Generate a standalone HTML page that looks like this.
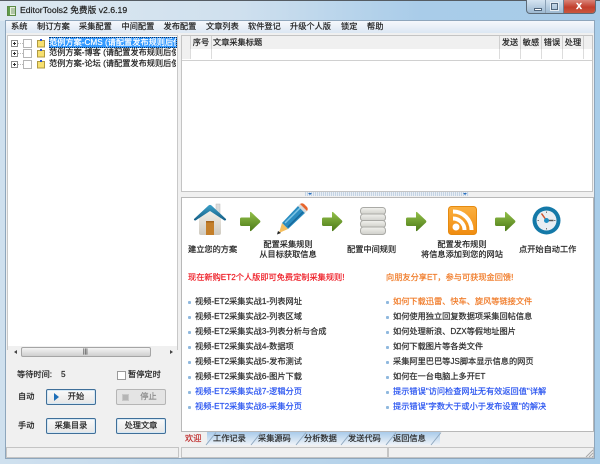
<!DOCTYPE html>
<html lang="zh"><head><meta charset="utf-8"><title>EditorTools2</title>
<style>
html,body{margin:0;padding:0;background:#fff}
#w{position:relative;width:600px;height:464px;overflow:hidden;font:8.2px/12px "Liberation Sans","Noto Sans CJK SC",sans-serif;color:#222;-webkit-text-stroke:.2px;background:linear-gradient(90deg,#cfe0ee,#b5d2ea 60%,#a9cde9)}
.a{position:absolute;white-space:nowrap}
.t{position:absolute;white-space:nowrap;font-size:8.2px;line-height:12px}
.c{text-align:center}
.hc{position:absolute;top:36px;height:13px;font-size:8.2px;line-height:13px;text-align:center;border-right:1px solid #cfcfcf;color:#222}
.v{position:absolute;top:49px;height:10px;border-right:1px solid #dcdcdc}
.btn{position:absolute;height:14px;width:48px;border:1px solid #3f6f99;border-radius:2px;background:linear-gradient(#fafafa,#e6e6e6);text-align:center;font-size:8.2px;line-height:14px;color:#222;box-shadow:inset 0 0 0 1px #d5e8f5}
.l{position:absolute;white-space:nowrap;font-size:8.2px;line-height:12px;color:#2c2c2c}
.d{position:absolute;width:3px;height:3px;background:#8fb8de;border-radius:1px}
.b{color:#2a55f0}.o{color:#f07b28}.r{color:#ee1c25}
.tab{position:absolute;top:432px;height:13px;font-size:8.2px;line-height:13px;color:#2c2c2c;white-space:nowrap}
</style></head><body><div id="w">
<!-- title -->
<div class="a" style="left:0;top:0;width:600px;height:1px;background:#555c63"></div>
<div class="a" style="left:0;top:1px;width:600px;height:20px;background:linear-gradient(90deg,#dde8f1 0,#cfe0ee 40%,#a9cce9 70%,#a7cbe8 100%)"></div>
<svg class="a" style="left:7px;top:6px" width="9" height="10" viewBox="0 0 9 10"><rect x=".5" y=".5" width="8" height="9" fill="#e6f0da" stroke="#5b8a45"/><rect x="1" y="1" width="2" height="8" fill="#5f9c4a"/><path d="M4 3h4M4 5h4M4 7h4" stroke="#7a9a72"/></svg>
<div class="t" style="left:20px;top:4px;font-size:8.7px;line-height:13px;color:#222">EditorTools2 免费版 v2.6.19</div>
<div class="a" style="left:526px;top:0;width:70px;height:14px;border:1px solid #5d6b78;border-top:0;border-radius:0 0 4px 4px;box-sizing:border-box;background:linear-gradient(#d5e4f1,#9db9d2);overflow:hidden">
<div class="a" style="left:37px;top:0;width:32px;height:13px;background:linear-gradient(#d98478,#c23f2d 55%,#c8573f)"></div>
<div class="a" style="left:18px;top:0;width:1px;height:13px;background:#8aa0b5"></div>
<div class="a" style="left:36px;top:0;width:1px;height:13px;background:#6c8197"></div>
<div class="a" style="left:7px;top:8px;width:6px;height:1px;background:#fff;border:1px solid #52677d"></div>
<div class="a" style="left:24px;top:3px;width:5px;height:5px;border:1px solid #52677d;outline:1px solid #e8eef4"></div>
<div class="t" style="left:49px;top:0;color:#fff;font-weight:bold;font-size:11px;line-height:13px">x</div>
</div>
<!-- client -->
<div class="a" style="left:5px;top:20px;width:590px;height:439px;background:#f0f0f0;border:1px solid #8ea6bc;box-sizing:border-box"></div>
<div class="a" style="left:6px;top:21px;width:588px;height:12px;background:linear-gradient(#f5f8fc,#dce7f3)"></div>
<div class="t" style="left:11px;top:21px">系统</div>
<div class="t" style="left:37px;top:21px">制订方案</div>
<div class="t" style="left:79px;top:21px">采集配置</div>
<div class="t" style="left:121.500px;top:21px">中间配置</div>
<div class="t" style="left:163.500px;top:21px">发布配置</div>
<div class="t" style="left:206px;top:21px">文章列表</div>
<div class="t" style="left:248px;top:21px">软件登记</div>
<div class="t" style="left:290px;top:21px">升级个人版</div>
<div class="t" style="left:341px;top:21px">锁定</div>
<div class="t" style="left:367px;top:21px">帮助</div>
<!-- tree -->
<div class="a" style="left:7px;top:35px;width:171px;height:315px;background:#fff;border:1px solid #c8c8c8;box-sizing:border-box"></div>
<svg class="a" style="left:10px;top:38px" width="36" height="34" viewBox="0 0 36 34">
<g fill="#fff" stroke="#8a8a8a"><rect x="1.500" y="2.500" width="6" height="6"/><rect x="1.500" y="12.500" width="6" height="6"/><rect x="1.500" y="23.500" width="6" height="6"/></g>
<path d="M3 5.500h3M4.500 4v3M3 15.500h3M4.500 14v3M3 26.500h3M4.500 25v3" stroke="#333"/>
<path d="M8 5.500h5M8 15.500h5M8 26.500h5" stroke="#bbb" stroke-dasharray="1 1"/>
<g fill="#fff" stroke="#b5b5b5"><rect x="13.500" y="1.500" width="8" height="8"/><rect x="13.500" y="11.500" width="8" height="8"/><rect x="13.500" y="22.500" width="8" height="8"/></g>
<g fill="#f7e070" stroke="#b09a40"><rect x="27.500" y="2.500" width="7" height="6.500"/><rect x="27.500" y="12.500" width="7" height="6.500"/><rect x="27.500" y="23.500" width="7" height="6.500"/></g>
<g fill="#2a4fd0"><rect x="30" y="1" width="2" height="2"/><rect x="30" y="11" width="2" height="2"/><rect x="30" y="22" width="2" height="2"/></g>
</svg>
<div class="a" style="left:49px;top:37px;width:128px;height:11px;background:#3399ff;outline:1px dotted #10305a;outline-offset:-1px"></div>
<div class="a" style="left:49px;top:37px;width:127px;height:12px;overflow:hidden;color:#fff;font-size:8.2px;line-height:12px">范例方案-CMS (请配置发布规则后使用)</div>
<div class="a" style="left:49px;top:47px;width:127px;height:12px;overflow:hidden;font-size:8.2px;line-height:12px">范例方案-博客 (请配置发布规则后使用)</div>
<div class="a" style="left:49px;top:58px;width:127px;height:12px;overflow:hidden;font-size:8.2px;line-height:12px">范例方案-论坛 (请配置发布规则后使用)</div>
<!-- scrollbar -->
<div class="a" style="left:8px;top:346px;width:169px;height:12px;background:#f0f0f0"></div>
<div class="a" style="left:21px;top:347px;width:130px;height:10px;background:linear-gradient(#f4f4f4,#cfcfcf);border:1px solid #a5a5a5;border-radius:2px;box-sizing:border-box"></div>
<div class="t" style="left:83px;top:346px;font-size:6px;color:#444">|||</div>
<div class="a" style="left:12px;top:350px;width:0;height:0;border:2px solid transparent;border-right:3px solid #444"></div>
<div class="a" style="left:170px;top:350px;width:0;height:0;border:2px solid transparent;border-left:3px solid #444"></div>
<!-- controls -->
<div class="t" style="left:17px;top:369px">等待时间:</div>
<div class="t" style="left:61px;top:369px">5</div>
<div class="a" style="left:117px;top:371px;width:7px;height:7px;background:#fff;border:1px solid #9a9a9a"></div>
<div class="t" style="left:128px;top:369px">暂停定时</div>
<div class="t" style="left:18px;top:391px">自动</div>
<div class="btn" style="left:46px;top:389px;text-indent:10px">开始</div>
<div class="a" style="left:54px;top:393px;width:0;height:0;border:4px solid transparent;border-left:5px solid #1e6fb8;border-right:0"></div>
<div class="btn" style="left:116px;top:389px;border-color:#b5b5b5;box-shadow:none;color:#8a8a8a;background:#e4e4e4;text-indent:15px">停止</div>
<div class="a" style="left:122px;top:394px;width:5px;height:5px;background:#b5b5b5;border:1px solid #c8c8c8"></div>
<div class="t" style="left:18px;top:420px">手动</div>
<div class="btn" style="left:46px;top:418px">采集目录</div>
<div class="btn" style="left:116px;top:418px">处理文章</div>
<div class="a" style="left:6px;top:447px;width:173px;height:11px;background:#f0f0f0;border:1px solid #c4c4c4;box-sizing:border-box"></div>
<!-- grid -->
<div class="a" style="left:181px;top:35px;width:412px;height:157px;background:#fff;border:1px solid #c4c4c4;box-sizing:border-box"></div>
<div class="a" style="left:182px;top:36px;width:410px;height:13px;background:#f0f0f0"></div>
<div class="a" style="left:182px;top:49px;width:410px;height:11px;border-bottom:1px solid #d0d0d0"></div>
<div class="a" style="left:182px;top:49px;width:8px;height:10px;background:#f0f0f0"></div>
<div class="hc" style="left:182px;width:8px"></div>
<div class="hc" style="left:191px;width:20px">序号</div>
<div class="hc" style="left:212px;width:287px;text-align:left;text-indent:1px">文章采集标题</div>
<div class="hc" style="left:500px;width:20px">发送</div>
<div class="hc" style="left:521px;width:20px">敏感</div>
<div class="hc" style="left:542px;width:20px">错误</div>
<div class="hc" style="left:563px;width:20px">处理</div>
<div class="v" style="left:190px"></div><div class="v" style="left:211px"></div><div class="v" style="left:499px"></div><div class="v" style="left:520px"></div><div class="v" style="left:541px"></div><div class="v" style="left:562px"></div><div class="v" style="left:583px"></div>
<!-- splitter -->
<div class="a" style="left:305px;top:192px;width:164px;height:4px;background:repeating-linear-gradient(90deg,#c5d4e4 0 1px,#e8eef5 1px 2px)"></div>
<div class="a" style="left:308px;top:193px;width:0;height:0;border:2px solid transparent;border-top:2px solid #2a70c0;border-bottom:0"></div>
<div class="a" style="left:463px;top:193px;width:0;height:0;border:2px solid transparent;border-top:2px solid #2a70c0;border-bottom:0"></div>
<!-- panel -->
<div class="a" style="left:181px;top:197px;width:413px;height:235px;background:#fff;border:1px solid #b8b8b8;box-sizing:border-box"></div>
<svg width="0" height="0" style="position:absolute"><defs>
<linearGradient id="g" x1="0" y1="0" x2="0" y2="1"><stop offset="0" stop-color="#93c04a"/><stop offset="1" stop-color="#4c7a18"/></linearGradient>
<linearGradient id="wall" x1="0" y1="0" x2="0" y2="1"><stop offset="0" stop-color="#f4f2ec"/><stop offset="1" stop-color="#cfcac0"/></linearGradient>
<linearGradient id="roof" x1="0" y1="0" x2="0" y2="1"><stop offset="0" stop-color="#3ba0c8"/><stop offset="1" stop-color="#155f86"/></linearGradient>
<linearGradient id="rss" x1="0" y1="0" x2="0" y2="1"><stop offset="0" stop-color="#fbb040"/><stop offset="1" stop-color="#f08c10"/></linearGradient>
<linearGradient id="cyl" x1="0" y1="0" x2="0" y2="1"><stop offset="0" stop-color="#f2f2ee"/><stop offset="1" stop-color="#cfcfca"/></linearGradient>
</defs></svg>
<!-- house -->
<svg class="a" style="left:193px;top:203px" width="34" height="33" viewBox="0 0 34 33"><rect x="23" y="1" width="4" height="10" fill="#dcdcdc" stroke="#bbb" stroke-width=".5"/><path d="M6 15L17 6l11 9v15a2 2 0 0 1-2 2H8a2 2 0 0 1-2-2z" fill="url(#wall)"/><path d="M1 16L15.500 2.500q1.500-1.200 3 0L33 16q.5 1.500-1.500 1.500L17 8 2.500 17.500Q.5 17.500 1 16z" fill="url(#roof)"/><rect x="13" y="18" width="8" height="14" fill="#c47f2a"/><rect x="13" y="18" width="8" height="1.500" fill="#a5651c"/></svg>
<!-- arrows -->
<svg class="a" style="left:239px;top:211px" width="22" height="21" viewBox="0 0 22 21"><path d="M1 8q0-1.500 1.500-1.500H11V1.500q0-1 1-.5l9 8.500q.8 1 0 2L12 20q-1 .5-1-.5V15H2.500Q1 15 1 13.500z" fill="url(#g)"/></svg>
<svg class="a" style="left:321px;top:211px" width="22" height="21" viewBox="0 0 22 21"><path d="M1 8q0-1.500 1.500-1.500H11V1.500q0-1 1-.5l9 8.500q.8 1 0 2L12 20q-1 .5-1-.5V15H2.500Q1 15 1 13.500z" fill="url(#g)"/></svg>
<svg class="a" style="left:405px;top:211px" width="22" height="21" viewBox="0 0 22 21"><path d="M1 8q0-1.500 1.500-1.500H11V1.500q0-1 1-.5l9 8.500q.8 1 0 2L12 20q-1 .5-1-.5V15H2.500Q1 15 1 13.500z" fill="url(#g)"/></svg>
<svg class="a" style="left:494px;top:211px" width="22" height="21" viewBox="0 0 22 21"><path d="M1 8q0-1.500 1.500-1.500H11V1.500q0-1 1-.5l9 8.500q.8 1 0 2L12 20q-1 .5-1-.5V15H2.500Q1 15 1 13.500z" fill="url(#g)"/></svg>
<!-- pencil -->
<svg class="a" style="left:276px;top:203px" width="32" height="32" viewBox="0 0 32 32"><path d="M6 20L22 3l7 7L12 26z" fill="#2a8cc0"/><path d="M9 20L24 5" stroke="#7fc6e6" stroke-width="1.500"/><path d="M12 24L27 9" stroke="#17689a" stroke-width="1.500"/><path d="M22 3l2-2 7 7-2 2z" fill="#d8d8d8"/><path d="M24 1q2-1.500 4 0l3 3q1.500 2 0 4z" fill="#e8652c"/><path d="M6 20l6 6-9 4z" fill="#f6c060"/><path d="M1 31.500l1-3.500 3 2z" fill="#222"/></svg>
<!-- db -->
<svg class="a" style="left:360px;top:207px" width="26" height="28" viewBox="0 0 26 28"><g fill="url(#cyl)" stroke="#aaaaa6"><rect x=".5" y=".5" width="25" height="7" rx="3"/><rect x=".5" y="7" width="25" height="7" rx="3"/><rect x=".5" y="13.500" width="25" height="7" rx="3"/><rect x=".5" y="20" width="25" height="7.500" rx="3"/></g></svg>
<!-- rss -->
<svg class="a" style="left:448px;top:206px" width="29" height="29" viewBox="0 0 29 29"><rect x=".5" y=".5" width="28" height="28" rx="3" fill="url(#rss)" stroke="#e58a10"/><circle cx="8" cy="21" r="3.500" fill="#fff"/><path d="M5 12.500a11.500 11.500 0 0 1 11.500 11.500M5 5.500a18.500 18.500 0 0 1 18.500 18.500" fill="none" stroke="#fff" stroke-width="4"/></svg>
<!-- clock -->
<svg class="a" style="left:532px;top:206px" width="29" height="29" viewBox="0 0 29 29"><circle cx="14.500" cy="14.500" r="14" fill="#1479a8"/><circle cx="14.500" cy="14.500" r="10" fill="#e8eef3"/><path d="M14.500 14.500L9.500 7.500" stroke="#d0502a" stroke-width="1.500"/><path d="M14.500 14.500h7" stroke="#555" stroke-width="1.500"/><path d="M14.500 5.500v1.500M14.500 22v1.500M5.500 14.500H7M22 14.500h1.500" stroke="#777"/><circle cx="14.500" cy="14.500" r="2.500" fill="#1d8fc4"/></svg>
<!-- labels -->
<div class="t" style="left:188px;top:244px">建立您的方案</div>
<div class="t c" style="left:238px;top:240px;width:100px;line-height:10px">配置采集规则<br>从目标获取信息</div>
<div class="t" style="left:347px;top:244px">配置中间规则</div>
<div class="t c" style="left:412px;top:240px;width:100px;line-height:10px">配置发布规则<br>将信息添加到您的网站</div>
<div class="t" style="left:519px;top:244px">点开始自动工作</div>
<div class="t r" style="left:188px;top:272px">现在新购ET2个人版即可免费定制采集规则!</div>
<div class="t o" style="left:386px;top:272px">向朋友分享ET，参与可获现金回馈!</div>
<!-- lists -->
<div class="d" style="left:188px;top:301px"></div><div class="l" style="left:195px;top:296px">视频-ET2采集实战1-列表网址</div>
<div class="d" style="left:188px;top:316px"></div><div class="l" style="left:195px;top:311px">视频-ET2采集实战2-列表区域</div>
<div class="d" style="left:188px;top:331px"></div><div class="l" style="left:195px;top:326px">视频-ET2采集实战3-列表分析与合成</div>
<div class="d" style="left:188px;top:346px"></div><div class="l" style="left:195px;top:341px">视频-ET2采集实战4-数据项</div>
<div class="d" style="left:188px;top:361px"></div><div class="l" style="left:195px;top:356px">视频-ET2采集实战5-发布测试</div>
<div class="d" style="left:188px;top:376px"></div><div class="l" style="left:195px;top:371px">视频-ET2采集实战6-图片下载</div>
<div class="d" style="left:188px;top:391px"></div><div class="l b" style="left:195px;top:386px">视频-ET2采集实战7-逻辑分页</div>
<div class="d" style="left:188px;top:406px"></div><div class="l b" style="left:195px;top:401px">视频-ET2采集实战8-采集分页</div>
<div class="d" style="left:386px;top:301px"></div><div class="l o" style="left:393px;top:296px">如何下载迅雷、快车、旋风等链接文件</div>
<div class="d" style="left:386px;top:316px"></div><div class="l" style="left:393px;top:311px">如何使用独立回复数据项采集回帖信息</div>
<div class="d" style="left:386px;top:331px"></div><div class="l" style="left:393px;top:326px">如何处理新浪、DZX等假地址图片</div>
<div class="d" style="left:386px;top:346px"></div><div class="l" style="left:393px;top:341px">如何下载图片等各类文件</div>
<div class="d" style="left:386px;top:361px"></div><div class="l" style="left:393px;top:356px">采集阿里巴巴等JS脚本显示信息的网页</div>
<div class="d" style="left:386px;top:376px"></div><div class="l" style="left:393px;top:371px">如何在一台电脑上多开ET</div>
<div class="d" style="left:386px;top:391px"></div><div class="l b" style="left:393px;top:386px">提示错误"访问检查网址无有效返回值"详解</div>
<div class="d" style="left:386px;top:406px"></div><div class="l b" style="left:393px;top:401px">提示错误"字数大于或小于发布设置"的解决</div>
<!-- tabs -->
<div class="a" style="left:207px;top:432px;width:233px;height:13px;background:linear-gradient(#a9cbea,#eef3f8)"></div>
<div class="tab" style="left:185px;color:#c03030">欢迎</div>
<div class="tab" style="left:213px">工作记录</div>
<div class="tab" style="left:258px">采集源码</div>
<div class="tab" style="left:304px">分析数据</div>
<div class="tab" style="left:348px">发送代码</div>
<div class="tab" style="left:393px">返回信息</div>
<svg class="a" style="left:181px;top:432px" width="270" height="15" viewBox="0 0 270 15"><path d="M25 13L35 .5M70 13L80 .5M115 13L125 .5M160 13L170 .5M205 13L215 .5M250 13L260 .5" stroke="#8fa8c0" fill="none"/></svg>
<div class="a" style="left:181px;top:447px;width:207px;height:11px;background:#f0f0f0;border:1px solid #c4c4c4;box-sizing:border-box"></div>
<div class="a" style="left:388px;top:447px;width:206px;height:11px;background:#f0f0f0;border:1px solid #c4c4c4;box-sizing:border-box"></div>
<svg class="a" style="left:585px;top:449px" width="9" height="9" viewBox="0 0 9 9"><path d="M1 8L8 1M4 8L8 4M7 8L8 7" stroke="#a8a8a8"/></svg>
</div></body></html>
